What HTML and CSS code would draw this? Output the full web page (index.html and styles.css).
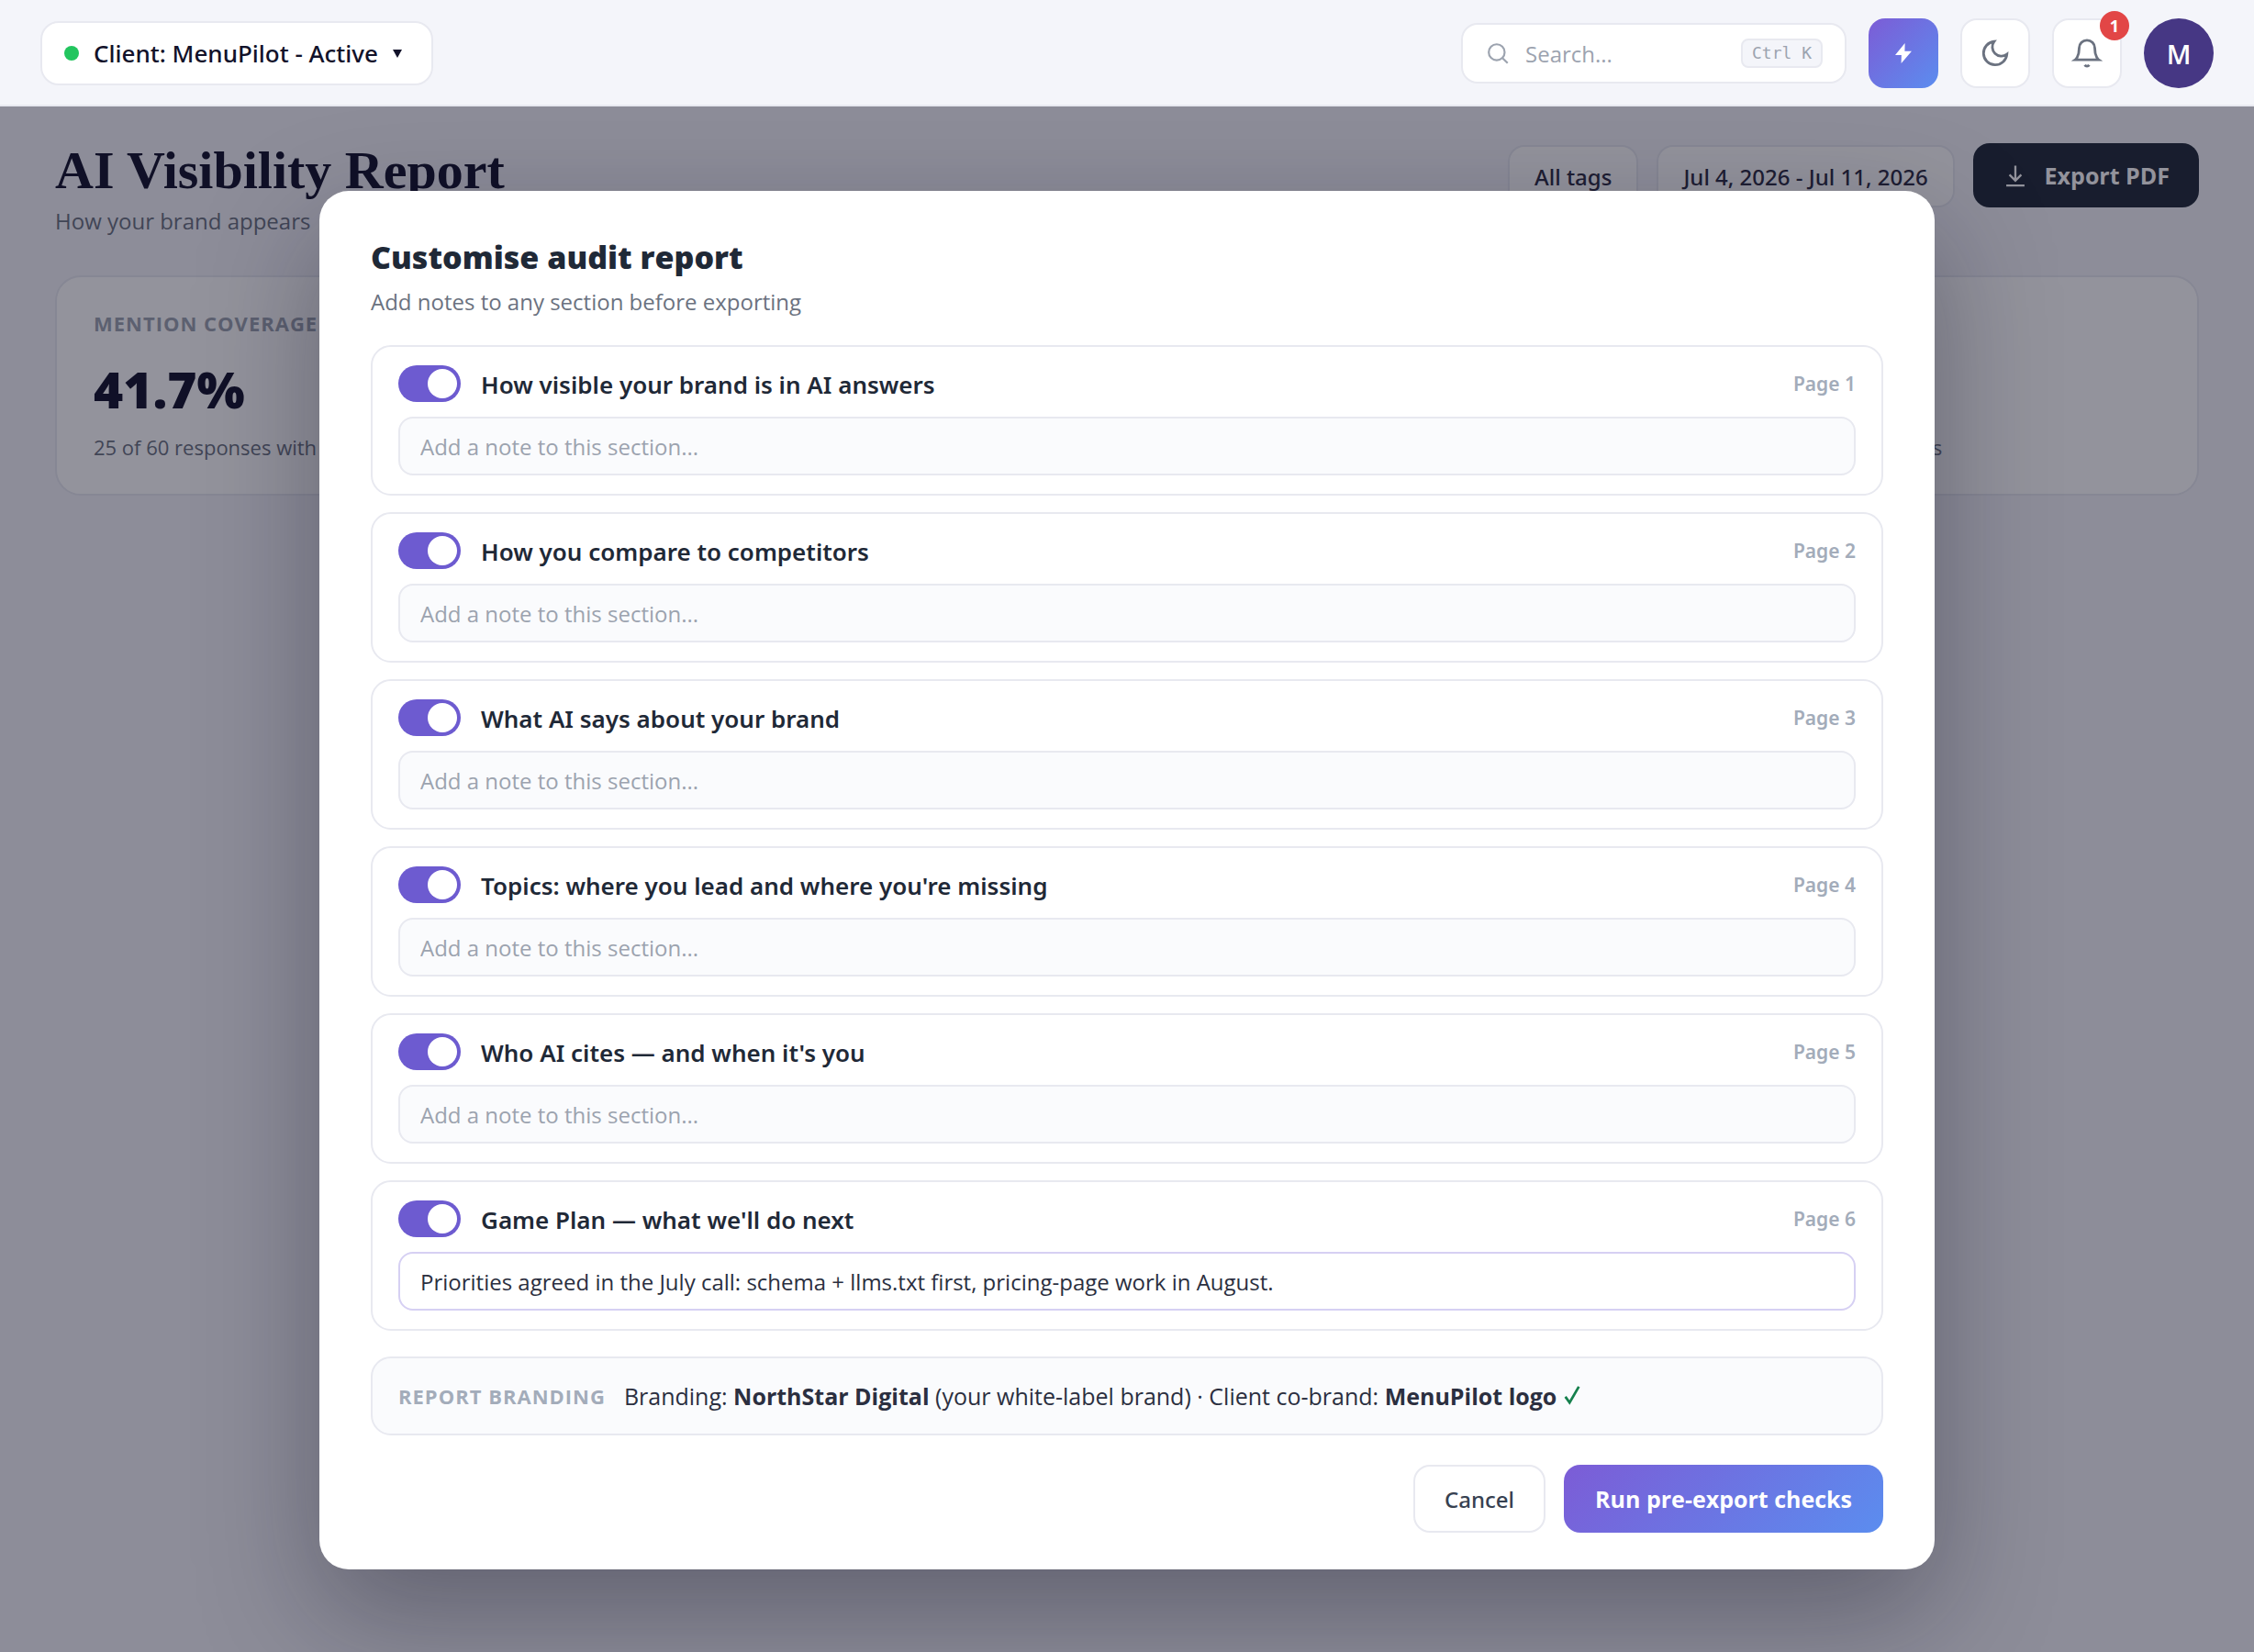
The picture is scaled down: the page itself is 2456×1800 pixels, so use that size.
FILE: index.html
```html
<!DOCTYPE html>
<html lang="en">
<head>
  <meta charset="UTF-8">
  <meta name="viewport" content="width=device-width, initial-scale=1.0">
  <title>AI Visibility Report</title>
  <link rel="stylesheet" href="styles.css">
</head>
<body>

  <header class="topbar">
    <button type="button" class="client-switch">
      <span class="status-dot"></span>
      <span>Client: MenuPilot - Active</span>
      <svg class="caret" viewBox="0 0 10 10" aria-hidden="true"><path d="M0 1h10L5 10z"/></svg>
    </button>

    <div class="topbar-actions">
      <label class="search">
        <svg class="icon-search" viewBox="0 0 24 24" aria-hidden="true"><circle cx="10" cy="11" r="8"/><path d="M21 22l-5-5"/></svg>
        <input type="text" placeholder="Search..." aria-label="Search">
        <kbd>Ctrl K</kbd>
      </label>
      <button type="button" class="icon-btn icon-btn-accent" aria-label="Quick actions">
        <svg class="icon-bolt" viewBox="0 0 24 24" aria-hidden="true"><path d="M13.500 1.800L3.700 13.800h6.300L9.800 22.200 20.300 10h-7z"/></svg>
      </button>
      <button type="button" class="icon-btn" aria-label="Dark mode">
        <svg class="icon" viewBox="0 0 24 24" aria-hidden="true"><path d="M21 12.800A9 9 0 1 1 11.200 3a7 7 0 0 0 9.800 9.800z"/></svg>
      </button>
      <button type="button" class="icon-btn" aria-label="Notifications">
        <svg class="icon" viewBox="0 0 24 24" aria-hidden="true"><path d="M18 8A6 6 0 0 0 6 8c0 7-3 9-3 9h18s-3-2-3-9"/><path d="M13.700 21a2 2 0 0 1-3.400 0"/></svg>
        <span class="badge">1</span>
      </button>
      <button type="button" class="avatar" aria-label="Account">M</button>
    </div>
  </header>

  <div class="stage">
    <main class="page">
      <div class="page-head">
        <div>
          <h1>AI Visibility Report</h1>
          <p class="page-sub">How your brand appears</p>
        </div>
        <div class="page-tools">
          <button type="button" class="tool-btn">All tags</button>
          <button type="button" class="tool-btn">Jul 4, 2026 - Jul 11, 2026</button>
          <button type="button" class="export-btn">
            <svg class="icon-export" viewBox="0 0 24 24" aria-hidden="true"><path d="M12 3v14M6.500 11.500L12 17l5.500-5.500M3.500 21.500h17"/></svg>
            Export PDF
          </button>
        </div>
      </div>

      <div class="stats">
        <div class="stat">
          <div class="stat-label">Mention coverage</div>
          <div class="stat-value">41.7%</div>
          <div class="stat-note">25 of 60 responses with a mention</div>
        </div>
        <div class="stat">
          <div class="stat-label">Citations</div>
          <div class="stat-value">18</div>
          <div class="stat-note">Links to your site</div>
        </div>
        <div class="stat">
          <div class="stat-label">Share of voice</div>
          <div class="stat-value">23.4%</div>
          <div class="stat-note">Compared with all five tracked competitors</div>
        </div>
      </div>
    </main>

    <div class="overlay">
      <form class="modal" role="dialog" aria-labelledby="modal-title">
        <h2 id="modal-title">Customise audit report</h2>
        <p class="modal-sub">Add notes to any section before exporting</p>

        <div class="sections">
          <div class="section">
            <div class="section-head">
              <input type="checkbox" class="toggle" id="s1" checked>
              <label for="s1">How visible your brand is in AI answers</label>
              <span class="page-no">Page 1</span>
            </div>
            <input type="text" class="note" placeholder="Add a note to this section..." aria-label="Note for page 1">
          </div>
          <div class="section">
            <div class="section-head">
              <input type="checkbox" class="toggle" id="s2" checked>
              <label for="s2">How you compare to competitors</label>
              <span class="page-no">Page 2</span>
            </div>
            <input type="text" class="note" placeholder="Add a note to this section..." aria-label="Note for page 2">
          </div>
          <div class="section">
            <div class="section-head">
              <input type="checkbox" class="toggle" id="s3" checked>
              <label for="s3">What AI says about your brand</label>
              <span class="page-no">Page 3</span>
            </div>
            <input type="text" class="note" placeholder="Add a note to this section..." aria-label="Note for page 3">
          </div>
          <div class="section">
            <div class="section-head">
              <input type="checkbox" class="toggle" id="s4" checked>
              <label for="s4">Topics: where you lead and where you're missing</label>
              <span class="page-no">Page 4</span>
            </div>
            <input type="text" class="note" placeholder="Add a note to this section..." aria-label="Note for page 4">
          </div>
          <div class="section">
            <div class="section-head">
              <input type="checkbox" class="toggle" id="s5" checked>
              <label for="s5">Who AI cites — and when it's you</label>
              <span class="page-no">Page 5</span>
            </div>
            <input type="text" class="note" placeholder="Add a note to this section..." aria-label="Note for page 5">
          </div>
          <div class="section">
            <div class="section-head">
              <input type="checkbox" class="toggle" id="s6" checked>
              <label for="s6">Game Plan — what we'll do next</label>
              <span class="page-no">Page 6</span>
            </div>
            <input type="text" class="note note-filled" value="Priorities agreed in the July call: schema + llms.txt first, pricing-page work in August." aria-label="Note for page 6">
          </div>
        </div>

        <div class="branding">
          <span class="branding-label">Report branding</span>
          <span>Branding: <b>NorthStar Digital</b> (your white-label brand) · Client co-brand: <b>MenuPilot logo</b> <svg class="check" viewBox="0 0 20 24" aria-hidden="true"><path d="M2 14l5 7L18 2"/></svg></span>
        </div>

        <div class="modal-actions">
          <button type="button" class="btn-cancel">Cancel</button>
          <button type="button" class="btn-primary">Run pre-export checks</button>
        </div>
      </form>
    </div>
  </div>

</body>
</html>
```
FILE: styles.css
```css
* {
  box-sizing: border-box;
}
body {
  margin: 0;
  min-height: 100vh;
  display: flex;
  flex-direction: column;
  background: #f4f5fa;
  color: #1f2937;
  font-family: "Segoe UI", "Open Sans", sans-serif;
  font-size: 24px;
}
h1, h2, p {
  margin: 0;
}
button, input {
  font: inherit;
}
svg {
  fill: none;
  stroke: currentColor;
  stroke-width: 2;
  flex: none;
}

/* medium and semibold labels */
.client-switch,
.tool-btn,
.section-head,
.btn-cancel {
  font-family: "Segoe UI", "Noto Sans", sans-serif;
}

/* top bar */
.topbar {
  display: flex;
  justify-content: space-between;
  align-items: center;
  height: 116px;
  padding: 2px 44px 0;
  border-bottom: 2px solid #e8e9f0;
}
.client-switch {
  display: flex;
  align-items: center;
  gap: 16px;
  height: 70px;
  padding: 0 32px 0 24px;
  background: #fff;
  border: 2px solid #e8e9f0;
  border-radius: 20px;
  color: #12122a;
  font-size: 26px;
  font-weight: 500;
}
.status-dot {
  width: 16px;
  height: 16px;
  border-radius: 50%;
  background: #22c55e;
}
.caret {
  width: 10px;
  height: 10px;
  fill: currentColor;
  stroke: none;
}
.topbar-actions {
  display: flex;
  align-items: center;
  gap: 24px;
}
.search {
  display: flex;
  align-items: center;
  gap: 16px;
  width: 420px;
  height: 66px;
  padding: 0 24px 0 26px;
  background: #fff;
  border: 2px solid #e8e9f0;
  border-radius: 18px;
  color: #9ca3af;
}
.search input {
  flex: 1;
  min-width: 0;
  padding: 0;
  border: 0;
  outline: 0;
  background: none;
}
.icon-search {
  width: 26px;
  height: 26px;
}
input::placeholder {
  color: #9ca3af;
  opacity: 1;
}
kbd {
  padding: 2px 10px;
  border: 2px solid #e8e9f0;
  border-radius: 8px;
  background: #f4f5fa;
  font: 18px/24px "DejaVu Sans Mono", monospace;
}
.icon-btn {
  position: relative;
  display: flex;
  align-items: center;
  justify-content: center;
  width: 76px;
  height: 76px;
  padding: 0;
  background: #fff;
  border: 2px solid #e8e9f0;
  border-radius: 18px;
  color: #6b7280;
}
.icon-btn-accent {
  border: 0;
  background: linear-gradient(135deg, #7c5cd6, #5b8def);
  color: #fff;
}
.icon {
  width: 34px;
  height: 34px;
}
.icon-bolt {
  width: 26px;
  height: 26px;
  fill: currentColor;
  stroke: none;
}
.badge {
  position: absolute;
  top: -10px;
  right: -10px;
  width: 32px;
  height: 32px;
  border-radius: 50%;
  background: #e24646;
  color: #fff;
  font-size: 18px;
  font-weight: 700;
  line-height: 32px;
}
.avatar {
  width: 76px;
  height: 76px;
  padding: 0;
  border: 0;
  border-radius: 50%;
  background: #463784;
  color: #fff;
  font-size: 29px;
  font-weight: 600;
}

/* report page */
.stage {
  position: relative;
  flex: 1;
  display: flex;
  flex-direction: column;
}
.page {
  position: absolute;
  inset: 0;
  padding: 40px 60px;
}
.page-head {
  display: flex;
  justify-content: space-between;
  align-items: flex-start;
  margin-bottom: 42px;
}
h1 {
  color: #12122a;
  font: 700 58px/60px Georgia, "Liberation Serif", serif;
}
.page-sub {
  margin-top: 8px;
  color: #6b7280;
  line-height: 34px;
}
.page-tools {
  display: flex;
  align-items: flex-end;
  gap: 20px;
}
.tool-btn {
  height: 68px;
  padding: 0 27px;
  background: #fff;
  border: 2px solid #e8e9f0;
  border-radius: 18px;
  color: #2b2b40;
  font-weight: 500;
}
.export-btn {
  display: flex;
  align-items: center;
  gap: 18px;
  height: 70px;
  padding: 0 32px;
  background: #1f2937;
  border: 0;
  border-radius: 18px;
  color: #fff;
  font-size: 25px;
  font-weight: 700;
}
.icon-export {
  width: 28px;
  height: 28px;
}
.stats {
  display: grid;
  grid-template-columns: repeat(3, 1fr);
  gap: 24px;
}
.stat {
  height: 240px;
  padding: 36px 40px;
  background: #fff;
  border: 2px solid #e8e9f0;
  border-radius: 28px;
}
.stat-label,
.branding-label {
  color: #9ca3af;
  font-size: 22px;
  font-weight: 700;
  letter-spacing: 1px;
  line-height: 28px;
  text-transform: uppercase;
}
.stat-value {
  margin-top: 24px;
  color: #12122a;
  font-size: 55px;
  font-weight: 800;
  line-height: 68px;
}
.stat-note {
  margin-top: 14px;
  color: #6b7280;
  font-size: 22px;
  line-height: 30px;
}

/* export dialog */
.overlay {
  position: relative;
  flex: 1;
  display: flex;
  align-items: center;
  justify-content: center;
  padding: 42px 40px 40px;
  background: rgba(15, 15, 35, 0.45);
}
.modal {
  width: 100%;
  max-width: 1760px;
  padding: 48px 56px 40px;
  background: #fff;
  border-radius: 32px;
  box-shadow: 0 48px 128px rgba(15, 15, 35, 0.35);
}
h2 {
  font-size: 34px;
  font-weight: 800;
  line-height: 48px;
}
.modal-sub {
  margin-bottom: 30px;
  padding-top: 8px;
  color: #6b7280;
  line-height: 34px;
}
.sections {
  display: grid;
  gap: 18px;
}
.section {
  padding: 20px 28px;
  border: 2px solid #e8e9f0;
  border-radius: 22px;
}
.section-head {
  display: flex;
  align-items: center;
  gap: 22px;
  height: 40px;
  margin-bottom: 16px;
}
.section-head label {
  flex: 1;
  padding-top: 2px;
  font-size: 26px;
  font-weight: 600;
}
.toggle {
  appearance: none;
  width: 68px;
  height: 40px;
  margin: 0;
  padding: 4px;
  border-radius: 20px;
  background: #cbd0da;
}
.toggle::before {
  content: "";
  display: block;
  width: 32px;
  height: 32px;
  border-radius: 50%;
  background: #fff;
}
.toggle:checked {
  background: #6d5bd0;
}
.toggle:checked::before {
  margin-left: auto;
}
.page-no {
  color: #a3acba;
  font-size: 21px;
  font-weight: 600;
}
.note {
  display: block;
  width: 100%;
  height: 64px;
  padding: 0 22px;
  background: #fafbfd;
  border: 2px solid #e8e9f0;
  border-radius: 16px;
  color: #2b2f40;
}
.note-filled {
  background: #fff;
  border-color: #d6d0f3;
}
.branding {
  display: flex;
  align-items: center;
  gap: 20px;
  height: 86px;
  margin: 28px 0 32px;
  padding: 0 28px;
  background: #fafbfd;
  border: 2px solid #e8e9f0;
  border-radius: 22px;
  color: #2b2f40;
  font-size: 25px;
}
.branding-label {
  color: #a3acba;
}
.branding b {
  font-weight: 700;
}
.check {
  width: 20px;
  height: 22px;
  color: #15804d;
  stroke-width: 3;
}
.modal-actions {
  display: flex;
  justify-content: flex-end;
  gap: 20px;
}
.btn-cancel,
.btn-primary {
  height: 74px;
  padding: 0 32px;
  border: 2px solid #e8e9f0;
  border-radius: 18px;
  background: #fff;
  color: #374151;
  font-weight: 500;
}
.btn-primary {
  padding: 0 34px;
  border: 0;
  background: linear-gradient(135deg, #7c5cd6, #5b8def);
  color: #fff;
  font-size: 25px;
  font-weight: 700;
}
```
